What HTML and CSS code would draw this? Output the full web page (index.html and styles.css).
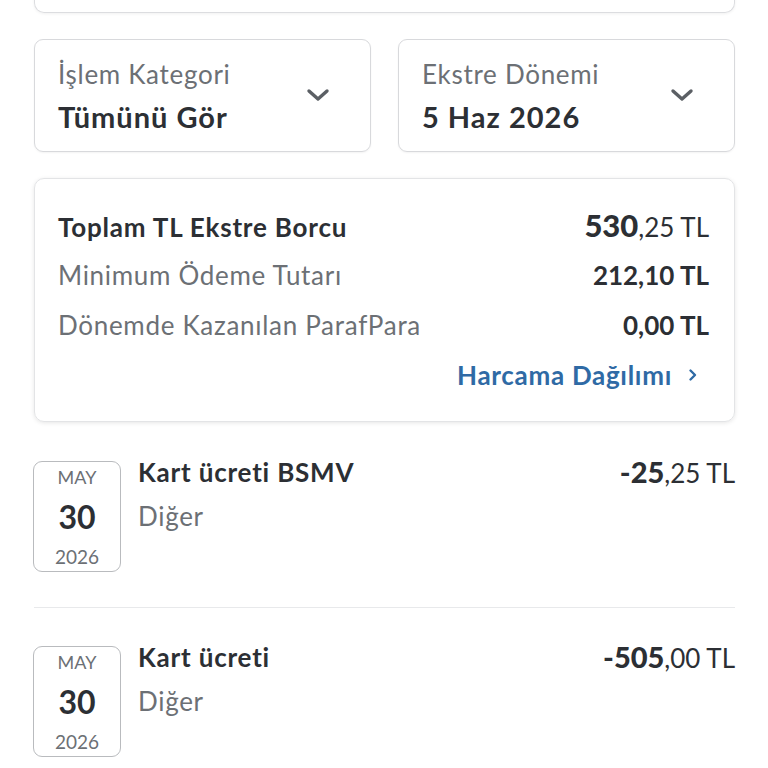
FILE: index.html
```html
<!DOCTYPE html>
<html>
  <head>
    <title>Ekstre</title>
    <link rel="stylesheet" href="styles.css">
  </head>
  <body>
    <div class="page">
      <div class="top-card"></div>

      <div class="filters">
        <div class="select">
          <div class="select-text">
            <span class="select-label">İşlem Kategori</span>
            <span class="select-value">Tümünü Gör</span>
          </div>
          <svg class="chev" width="24" height="14" viewBox="0 0 24 14"><path d="M3 3 L12 11 L21 3" fill="none" stroke="#5b5f64" stroke-width="3.4" stroke-linecap="round" stroke-linejoin="round"/></svg>
        </div>
        <div class="select">
          <div class="select-text">
            <span class="select-label">Ekstre Dönemi</span>
            <span class="select-value">5 Haz 2026</span>
          </div>
          <svg class="chev" width="24" height="14" viewBox="0 0 24 14"><path d="M3 3 L12 11 L21 3" fill="none" stroke="#5b5f64" stroke-width="3.4" stroke-linecap="round" stroke-linejoin="round"/></svg>
        </div>
      </div>

      <div class="summary">
        <div class="sum-row">
          <span class="sum-title">Toplam TL Ekstre Borcu</span>
          <span class="amount total"><b>530</b>,25 TL</span>
        </div>
        <div class="sum-row">
          <span class="sum-label">Minimum Ödeme Tutarı</span>
          <span class="amount">212,10 TL</span>
        </div>
        <div class="sum-row">
          <span class="sum-label">Dönemde Kazanılan ParafPara</span>
          <span class="amount">0,00 TL</span>
        </div>
        <div class="link-row">
          <a class="link">Harcama Dağılımı</a>
          <svg width="10" height="14" viewBox="0 0 10 14"><path d="M2.5 2.5 L7 7 L2.5 11.5" fill="none" stroke="#2f6aa5" stroke-width="2.4" stroke-linecap="round" stroke-linejoin="round"/></svg>
        </div>
      </div>

      <div class="tx">
        <div class="date">
          <span class="month">MAY</span>
          <span class="day">30</span>
          <span class="year">2026</span>
        </div>
        <div class="tx-info">
          <span class="tx-title">Kart ücreti BSMV</span>
          <span class="tx-cat">Diğer</span>
        </div>
        <span class="tx-amount"><b>-25</b>,25 TL</span>
      </div>

      <div class="tx">
        <div class="date">
          <span class="month">MAY</span>
          <span class="day">30</span>
          <span class="year">2026</span>
        </div>
        <div class="tx-info">
          <span class="tx-title">Kart ücreti</span>
          <span class="tx-cat">Diğer</span>
        </div>
        <span class="tx-amount"><b>-505</b>,00 TL</span>
      </div>
    </div>
  </body>
</html>
```

FILE: styles.css
```css
body {margin: 0; background: #fff; font-family: "Lato", "Noto Sans", sans-serif; color: #2c2f34; overflow: hidden;}
.page {padding: 0 33px 0 34px; width: 701px;}

.top-card {height: 22px; margin-top: -10px; border: 1.5px solid #dcdde0; border-top: none; border-radius: 0 0 10px 10px; box-shadow: 0 1px 3px rgba(0,0,0,0.06);}

.filters {display: flex; gap: 27px; margin-top: 26px;}
.select {flex: 1; height: 111px; border: 1.5px solid #d8d9dc; border-radius: 9px; display: flex; align-items: center; justify-content: space-between; padding: 0 40px 0 23px; box-sizing: content-box; box-shadow: 0 1px 2px rgba(0,0,0,0.05);}
.select-text {display: flex; flex-direction: column; gap: 10px; margin-top: 0;}
.select-label {font-size: 26px; color: #6c7075; line-height: 32px; letter-spacing: 0.7px;}
.select-value {font-size: 29px; font-weight: bold; color: #2c2f34; line-height: 34px; letter-spacing: 1px;}
.chev {margin-top: -2px;}

.summary {margin-top: 26px; border: 1.5px solid #e3e4e6; border-radius: 10px; box-shadow: 0 1px 4px rgba(0,0,0,0.10); padding: 21px 25px 21px 23px; display: flex; flex-direction: column;}
.sum-row {display: flex; justify-content: space-between; align-items: baseline; height: 50px; line-height: 50px;}
.sum-title {font-size: 26px; font-weight: bold; letter-spacing: 0.8px;}
.sum-label {font-size: 26px; color: #6c7075; letter-spacing: 0.7px;}
.amount {font-size: 26px; font-weight: bold; color: #2c2f34;}
.amount.total {font-weight: normal;}
.amount.total b {font-size: 31px; font-weight: 900;}
.link-row {display: flex; justify-content: flex-end; align-items: center; gap: 16px; height: 50px; padding-right: 11px;}
.link {font-size: 26px; font-weight: bold; color: #2f6aa5; letter-spacing: 0.7px;}

.tx {display: flex; align-items: flex-start; padding: 39px 0 35px 0; border-bottom: 1.5px solid #e8e9eb;}
.tx:last-child {border-bottom: none; padding-top: 38px;}
.date {width: 88px; height: 111px; border: 1.5px solid #b9bbbe; border-radius: 9px; display: flex; flex-direction: column; align-items: center; justify-content: space-between; padding: 2px 0 1px; box-sizing: border-box; margin-left: -1px;}
.month {font-size: 18px; color: #6c7075; line-height: 26px;}
.day {font-size: 32px; font-weight: bold; color: #2c2f34; line-height: 38px;}
.year {font-size: 19px; color: #6c7075; line-height: 26px;}
.tx-info {flex: 1; display: flex; flex-direction: column; gap: 18px; margin-left: 17px;}
.tx-title {font-size: 26px; font-weight: bold; line-height: 22px; letter-spacing: 0.8px;}
.tx-cat {font-size: 26px; color: #6c7075; line-height: 30px; letter-spacing: 0.7px;}
.tx-amount {font-size: 26px; color: #2c2f34; line-height: 22px;}
.tx-amount b {font-size: 29px; font-weight: 900;}
```
